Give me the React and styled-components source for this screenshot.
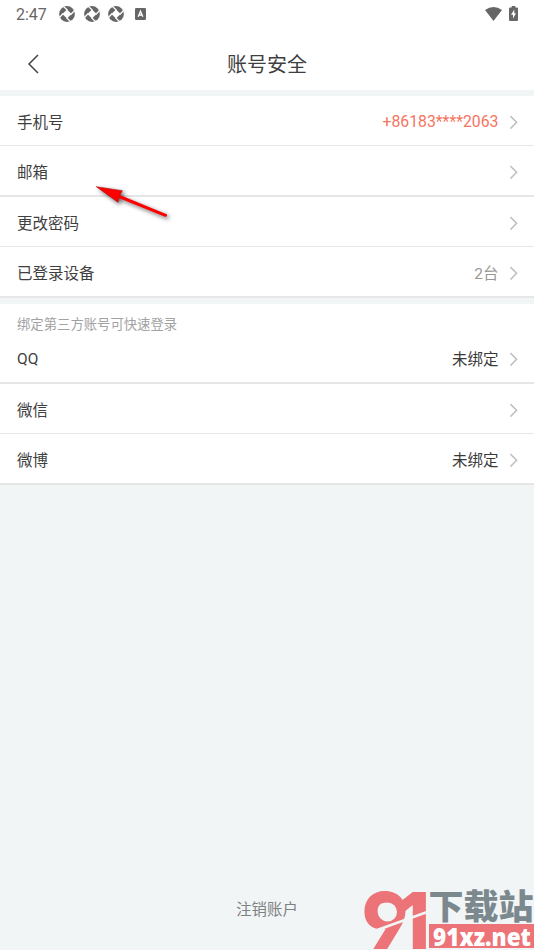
import styled, { createGlobalStyle } from "styled-components";

const GlobalStyle = createGlobalStyle`
  * {
    box-sizing: border-box;
  }
  body {
    margin: 0;
    background: #f1f5f6;
    font-family: Roboto, "Noto Sans CJK SC", sans-serif;
    color: #3f3f3f;
  }
`;

const Page = styled.div`
  position: relative;
  display: flex;
  flex-direction: column;
  height: 950px;
  overflow: hidden;
  background: #f1f5f6;
`;

const StatusBar = styled.div`
  display: flex;
  align-items: center;
  justify-content: space-between;
  height: 28px;
  padding: 0 16px;
  background: #fff;
`;

const StatusGroup = styled.div`
  display: flex;
  align-items: center;
  gap: ${({ $gap }) => $gap}px;
  height: 27px;
  padding-bottom: 1px;
`;

const Time = styled.span`
  width: 34.5px;
  padding-top: 2px;
  font-size: 16px;
  line-height: 26px;
  color: #666;
`;

const Header = styled.header`
  display: grid;
  grid-template-columns: 60px 1fr 60px;
  align-items: center;
  height: 62px;
  padding-top: 11px;
  background: #fff;
`;

const Back = styled.button`
  display: flex;
  padding: 0 0 2px 27px;
  border: 0;
  background: none;
`;

const Title = styled.h1`
  margin: 0;
  padding-top: 1px;
  font-size: 20px;
  font-weight: 400;
  line-height: 30px;
  text-align: center;
`;

const Group = styled.section`
  margin-top: 6px;
  background: #fff;
`;

const Hint = styled.p`
  height: 29px;
  margin: 0;
  padding: 9px 17px 0;
  font-size: 13.35px;
  line-height: 24px;
  color: #a2a2a2;
`;

const Row = styled.div`
  display: flex;
  align-items: center;
  height: ${({ $thick }) => ($thick ? 51 : 50)}px;
  padding: 2px 16px 0 17px;
  border-bottom: ${({ $thick }) => ($thick ? 2 : 1)}px solid #e6e6e6;
  font-size: 15.5px;
`;

const Label = styled.span`
  flex: 1;
  padding-bottom: ${({ $latin }) => ($latin ? 0 : 2)}px;
`;

const Value = styled.span`
  margin-right: 11.5px;
  padding-bottom: ${({ $latin }) => ($latin ? 1 : 2)}px;
  font-size: ${({ $latin }) => ($latin ? 15.8 : 15.5)}px;
  color: ${({ $color }) => $color || "#3a3a3a"};
`;

const Logout = styled.button`
  margin: auto auto 28px;
  padding: 0;
  border: 0;
  background: none;
  font-family: inherit;
  font-size: 15.4px;
  line-height: 24px;
  color: #7f8181;
`;

const Pointer = styled.svg`
  position: absolute;
  left: 90px;
  top: 180px;
  filter: drop-shadow(2px 2px 2px rgba(0, 0, 0, 0.6));
`;

const Watermark = styled.svg`
  position: absolute;
  right: 0;
  bottom: 0;
  overflow: visible;
`;

const Digit = styled.text`
  font-family: Inter, sans-serif;
  font-size: 78px;
  font-weight: 900;
  font-feature-settings: "cv04" 1;
`;

const ShutterIcon = () => (
  <svg width="16" height="16" viewBox="-8 -8 16 16">
    <circle r="7.9" fill="#666" />
    <path d="M0-4.6 4.6 0 0 4.6-4.6 0Z" fill="#fff" />
    <path
      d="M.5-3.8-4-8M3.8.5 8-4M-.5 3.8 4 8M-3.8-.5-8 4"
      stroke="#fff"
      strokeWidth="1.2"
    />
  </svg>
);

const KeyboardIcon = () => (
  <svg width="15" height="12" viewBox="-2 0 15 12">
    <rect width="11" height="12" rx="1.3" fill="#666" />
    <path d="M3.2 8.8 5.5 3.3 7.8 8.8M4 7h3" fill="none" stroke="#fff" strokeWidth="1.3" />
  </svg>
);

const WifiIcon = () => (
  <svg width="17" height="14" viewBox="0 0 17 14">
    <path d="M0 3Q8.5-3 17 3L8.5 14Z" fill="#666" />
  </svg>
);

const BatteryIcon = () => (
  <svg width="9" height="15" viewBox="0 0 9 15">
    <path d="M2.7 0h3.6v1.5H8q1 0 1 1V14q0 1-1 1H1q-1 0-1-1V2.5q0-1 1-1h1.7Z" fill="#666" />
    <path d="M5.3 3.5 2 8.8h2v3.7L7 7.3H5.3Z" fill="#fff" />
  </svg>
);

const Chevron = () => (
  <svg width="8" height="14" viewBox="0 0 8 14">
    <path d="M.4 1 6.6 7.3.4 13.6" fill="none" stroke="#bdbdbd" strokeWidth="1.5" />
  </svg>
);

const accountRows = [
  { label: "手机号", value: "+86183****2063", color: "#f4755f", latin: true },
  { label: "邮箱", thick: true },
  { label: "更改密码" },
  { label: "已登录设备", value: "2台", color: "#999", thick: true },
];

const socialRows = [
  { label: "QQ", value: "未绑定", thick: true },
  { label: "微信" },
  { label: "微博", value: "未绑定", thick: true },
];

const SettingRow = ({ label, value, color, thick, latin }) => (
  <Row $thick={thick}>
    <Label $latin={label === "QQ"}>{label}</Label>
    {value && (
      <Value $color={color} $latin={latin}>
        {value}
      </Value>
    )}
    <Chevron />
  </Row>
);

const App = () => {
  return (
    <Page>
      <GlobalStyle />
      <StatusBar>
        <StatusGroup $gap={8.5}>
          <Time>2:47</Time>
          <ShutterIcon />
          <ShutterIcon />
          <ShutterIcon />
          <KeyboardIcon />
        </StatusGroup>
        <StatusGroup $gap={7}>
          <WifiIcon />
          <BatteryIcon />
        </StatusGroup>
      </StatusBar>

      <Header>
        <Back aria-label="返回">
          <svg width="12" height="20" viewBox="0 0 12 20">
            <path d="M11 1 2 10l9 9" fill="none" stroke="#444" strokeWidth="1.5" />
          </svg>
        </Back>
        <Title>账号安全</Title>
      </Header>

      <Group>
        {accountRows.map((row) => (
          <SettingRow key={row.label} {...row} />
        ))}
      </Group>

      <Group>
        <Hint>绑定第三方账号可快速登录</Hint>
        {socialRows.map((row) => (
          <SettingRow key={row.label} {...row} />
        ))}
      </Group>

      <Logout>注销账户</Logout>

      <Pointer width="84" height="44" viewBox="0 0 84 44">
        <path d="M28 16 75.5 35.3" stroke="#f00" strokeWidth="3" strokeLinecap="round" />
        <path d="M6.3 6.7 32.3 10.7 29.5 15.8 28 22.3Z" fill="#f00" stroke="#b01010" strokeWidth=".6" />
      </Pointer>

      <Watermark width="172" height="72" viewBox="362 878 172 72">
        <g fill="#ec7478">
          <Digit x="362" y="949" textLength="46" lengthAdjust="spacingAndGlyphs">
            9
          </Digit>
          <Digit x="399" y="949" textLength="30" lengthAdjust="spacingAndGlyphs">
            1
          </Digit>
        </g>
        <circle cx="387.5" cy="912" r="9.5" fill="#f1f5f6" />
        <path d="M366 934 430 911" stroke="#f1f5f6" strokeWidth="2.5" />
        <text
          x="428.5"
          y="919"
          fontSize="34.5"
          fontWeight="900"
          fontFamily="Noto Sans CJK SC, sans-serif"
          fill="#7b888e"
          textLength="105"
          lengthAdjust="spacingAndGlyphs"
        >
          下载站
        </text>
        <rect x="429" y="924" width="105" height="24" fill="#ec7478" />
        <text
          x="433"
          y="945.5"
          fontSize="25.5"
          fontWeight="900"
          fontFamily="Open Sans, sans-serif"
          fill="#fff"
          textLength="98"
          lengthAdjust="spacingAndGlyphs"
        >
          91xz.net
        </text>
      </Watermark>
    </Page>
  );
};

export default App;
